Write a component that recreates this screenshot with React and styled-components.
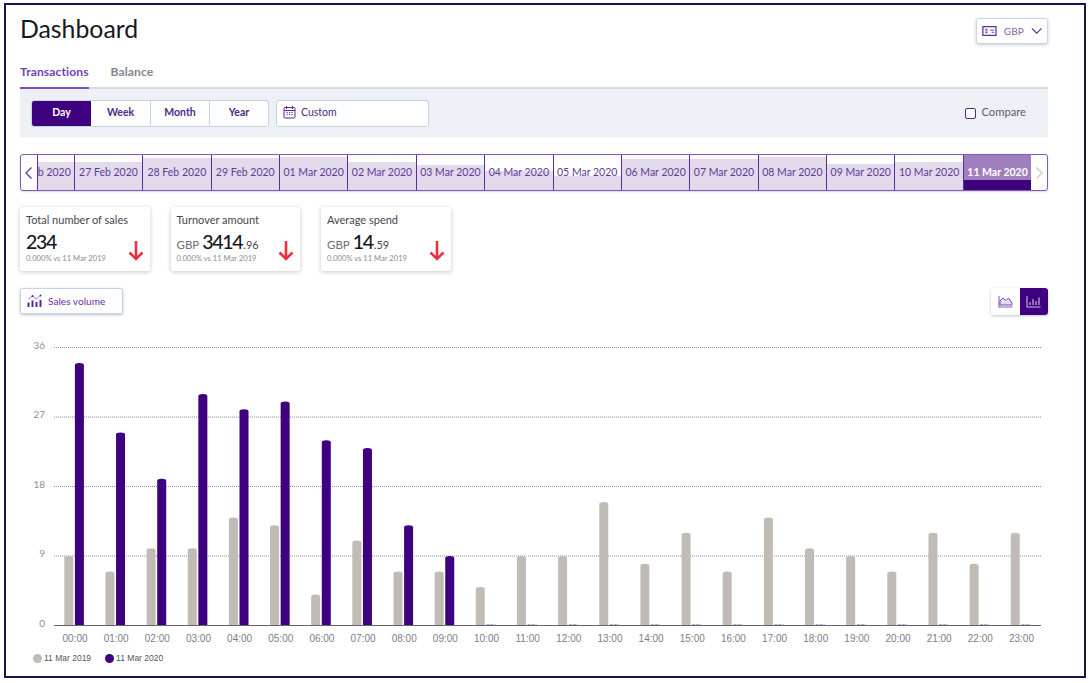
import React from 'react';
import styled, { createGlobalStyle } from 'styled-components';

const GlobalStyle = createGlobalStyle`
  html, body {
    margin: 0;
    padding: 0;
    background: #fff;
    overflow: hidden;
  }
  body {
    font-family: 'Lato', 'Liberation Sans', sans-serif;
  }
`;

const PURPLE = '#3f007f';

const Frame = styled.div`
  box-sizing: border-box;
  width: 1082px;
  height: 675px;
  margin: 3px 0 0 4px;
  padding: 13px 36px 0 14px;
  border: 2px solid #1f1150;
`;

const Header = styled.div`
  display: flex;
  justify-content: space-between;
  align-items: center;
  height: 26px;
`;

const Title = styled.h1`
  margin: 0 0 5px;
  font-size: 24.8px;
  font-weight: 400;
  color: #17171f;
`;

const CurrencyButton = styled.button`
  box-sizing: border-box;
  display: flex;
  align-items: center;
  gap: 7px;
  width: 72px;
  height: 26px;
  padding: 0 5px;
  background: #fff;
  border: 1px solid #c9d6ea;
  border-radius: 3px;
  box-shadow: 0 1px 3px rgba(60, 80, 120, 0.3);
  font: inherit;
  font-size: 10px;
  color: #7b6a95;
`;

const Tabs = styled.div`
  display: flex;
  gap: 22px;
  height: 23px;
  margin-top: 20px;
  border-bottom: 2px solid #d9dadd;
`;

const Tab = styled.div`
  height: 25px;
  box-sizing: border-box;
  font-size: 12.1px;
  font-weight: 700;
  letter-spacing: 0.1px;
  color: ${(props) => (props.$active ? '#6f42b5' : '#85858d')};
  border-bottom: ${(props) => (props.$active ? '2px solid #7a4fc0' : 'none')};
`;

const FilterBand = styled.div`
  display: flex;
  align-items: center;
  height: 48px;
  padding: 0 22px 0 11px;
  background: #edf0f5;
`;

const PeriodGroup = styled.div`
  display: flex;
  height: 27px;
  box-sizing: border-box;
  background: #fff;
  border: 1px solid #c5d3e8;
  border-radius: 3px;
  overflow: hidden;
`;

const PeriodButton = styled.div`
  box-sizing: border-box;
  display: flex;
  align-items: center;
  justify-content: center;
  width: 59px;
  padding-bottom: 2px;
  font-size: 10.5px;
  font-weight: 700;
  color: ${(props) => (props.$active ? '#fff' : '#4b2a88')};
  background: ${(props) => (props.$active ? PURPLE : 'transparent')};
  border-left: ${(props) => (props.$divider ? '1px solid #c5d3e8' : 'none')};
`;

const CustomField = styled.div`
  box-sizing: border-box;
  display: flex;
  align-items: center;
  gap: 5px;
  width: 153px;
  height: 27px;
  margin-left: 7px;
  padding: 0 0 2px 6px;
  background: #fff;
  border: 1px solid #c5d3e8;
  border-radius: 3px;
  font-size: 10.5px;
  color: #4b2a88;
`;

const CompareLabel = styled.label`
  display: flex;
  align-items: center;
  gap: 6px;
  margin: -3px 0 0 auto;
  font-size: 11.2px;
  color: #5e5a72;
`;

const CheckBox = styled.span`
  box-sizing: border-box;
  width: 11px;
  height: 11px;
  margin-top: 4px;
  background: #fff;
  border: 1px solid #4b2a88;
  border-radius: 2px;
`;

const DateStrip = styled.div`
  box-sizing: border-box;
  display: flex;
  height: 37px;
  margin-top: 17px;
  background: #fff;
  border: 1px solid #8457b8;
  border-radius: 3px;
  box-shadow: 0 1px 2px rgba(60, 60, 80, 0.2);
  overflow: hidden;
`;

const StripArrow = styled.div`
  flex: 1 0 15px;
  display: flex;
  align-items: center;
  justify-content: center;
  color: ${(props) => props.$color};
`;

const DateCell = styled.div`
  box-sizing: border-box;
  flex: 0 0 ${(props) => props.$width || 68.4}px;
  display: flex;
  align-items: center;
  justify-content: ${(props) => (props.$clipped ? 'flex-end' : 'center')};
  padding: 0 ${(props) => (props.$clipped ? 3 : 0)}px 2px 0;
  border-left: 1px solid #5c2c9e;
  overflow: hidden;
  white-space: nowrap;
  font-size: 10.5px;
  color: ${(props) => (props.$selected ? '#fff' : '#5d3a98')};
  font-weight: ${(props) => (props.$selected ? 700 : 400)};
  background: ${(props) =>
    props.$selected
      ? `linear-gradient(to top, ${PURPLE} 29%, #a07fbe 29%)`
      : `linear-gradient(to top, #e2daeb ${props.$fill}%, #fff ${props.$fill}%)`};
`;

const CardRow = styled.div`
  display: flex;
  gap: 21px;
  margin-top: 16px;
`;

const Card = styled.div`
  box-sizing: border-box;
  display: flex;
  flex-direction: column;
  width: 129.5px;
  height: 64px;
  padding: 6px 6px 0;
  background: #fff;
  border-radius: 2px;
  box-shadow: 0 1px 4px rgba(50, 50, 70, 0.28);
`;

const CardTitle = styled.div`
  font-size: 11px;
  color: #45454f;
`;

const CardBody = styled.div`
  display: flex;
  justify-content: space-between;
  align-items: flex-end;
  margin-top: 4px;
`;

const CardValue = styled.div`
  display: flex;
  align-items: baseline;
  gap: 3px;
  height: 21px;
  font-size: 19.5px;
  font-weight: 500;
  letter-spacing: -1.3px;
  color: #17171f;
`;

const Currency = styled.span`
  font-size: 11.5px;
  font-weight: 400;
  letter-spacing: 0;
  color: #6f6f78;
`;

const Cents = styled.span`
  font-size: 11px;
  font-weight: 400;
  letter-spacing: 0;
  margin-left: -2px;
  color: #45454f;
`;

const CardNote = styled.div`
  margin-top: 2px;
  font-size: 7.6px;
  line-height: 10px;
  color: #8c8c92;
  white-space: nowrap;
`;

const ArrowSlot = styled.div`
  display: flex;
  margin-bottom: 2px;
`;

const ChartTools = styled.div`
  display: flex;
  justify-content: space-between;
  height: 27px;
  margin-top: 17px;
`;

const MetricButton = styled.div`
  box-sizing: border-box;
  display: flex;
  align-items: center;
  gap: 6px;
  width: 103px;
  height: 26px;
  padding-left: 6px;
  background: #fff;
  border: 1px solid #c5d3e8;
  border-radius: 2px;
  box-shadow: 0 1px 3px rgba(60, 80, 120, 0.35);
  font-size: 10.1px;
  color: #6a2fa0;
`;

const ViewToggle = styled.div`
  display: flex;
  width: 57px;
  height: 27px;
  border-radius: 3px;
  box-shadow: 0 1px 3px rgba(60, 80, 120, 0.35);
  overflow: hidden;
`;

const ViewButton = styled.div`
  flex: 1;
  display: flex;
  align-items: center;
  justify-content: center;
  background: ${(props) => (props.$active ? PURPLE : '#fff')};
`;

const ChartSvg = styled.svg`
  display: block;
  margin-top: 20px;
`;

const Legend = styled.div`
  display: flex;
  gap: 14px;
  height: 14px;
  margin-top: 3px;
  padding-left: 13px;
  font-family: 'Liberation Sans', Arial, sans-serif;
  font-size: 8.5px;
  color: #55555c;
`;

const LegendItem = styled.div`
  display: flex;
  align-items: center;
  gap: 2px;
`;

const LegendDot = styled.span`
  width: 9px;
  height: 9px;
  border-radius: 50%;
  background: ${(props) => props.$color};
`;

const dates = [
  ['27 Feb 2020', 81],
  ['28 Feb 2020', 91],
  ['29 Feb 2020', 91],
  ['01 Mar 2020', 95],
  ['02 Mar 2020', 81],
  ['03 Mar 2020', 71],
  ['04 Mar 2020', 54],
  ['05 Mar 2020', 40],
  ['06 Mar 2020', 89],
  ['07 Mar 2020', 89],
  ['08 Mar 2020', 94],
  ['09 Mar 2020', 74],
  ['10 Mar 2020', 80],
];

const lastYear = [9, 7, 10, 10, 14, 13, 4, 11, 7, 7, 5, 9, 9, 16, 8, 12, 7, 14, 10, 9, 7, 12, 8, 12];
const thisYear = [34, 25, 19, 30, 28, 29, 24, 23, 13, 9];

const ChevronLeft = ({ color = 'currentColor' }) => (
  <svg width="9" height="14" viewBox="0 0 9 14" fill="none" stroke={color} strokeWidth="1.3">
    <path d="M7.5 1.5 2 7l5.5 5.5" />
  </svg>
);

const ChevronRight = ({ color = 'currentColor' }) => (
  <svg width="9" height="14" viewBox="0 0 9 14" fill="none" stroke={color} strokeWidth="1.3">
    <path d="M1.5 1.5 7 7l-5.5 5.5" />
  </svg>
);

const MoneyIcon = () => (
  <svg width="17" height="12" viewBox="0 0 17 12" fill="none" stroke="#5a2a9c">
    <rect x="1" y="1" width="15" height="10" strokeWidth="1.4" />
    <path d="M3.5 4h3M3.5 6h3M3.5 8h3M9 5h5M11 7.5h3" strokeWidth="1" />
  </svg>
);

const CalendarIcon = () => (
  <svg width="13" height="14" viewBox="0 0 13 14" fill="none" stroke="#5a2a9c" strokeWidth="1">
    <rect x="1" y="2.5" width="11" height="10.5" rx="1" />
    <path d="M1 5.5h11M3.5 1v3M9.5 1v3" />
    <path d="M3.5 7.5h1.2M6 7.5h1.2M8.5 7.5h1.2M3.5 9.5h1.2M6 9.5h1.2M8.5 9.5h1.2" />
  </svg>
);

const DownArrow = () => (
  <svg width="16" height="21" viewBox="0 0 16 21" fill="none" stroke="#ee2e3f" strokeWidth="2.6">
    <path d="M8 1v18M1.5 12.5 8 19l6.5-6.5" />
  </svg>
);

const VolumeIcon = () => (
  <svg width="15" height="14" viewBox="0 0 15 14" fill="none" stroke="#5a2a9c">
    <path d="M1.5 13V8.5M5.5 13V6.5M9.5 13V8M13.5 13V6" strokeWidth="2" />
    <path d="M1.5 5 5.5 2l4 3 4-3.5" strokeWidth="1" strokeDasharray="1.5 1" />
    <circle cx="5.5" cy="2" r="1" fill="#5a2a9c" stroke="none" />
    <circle cx="13.5" cy="1.5" r="1" fill="#5a2a9c" stroke="none" />
  </svg>
);

const AreaIcon = () => (
  <svg width="15" height="13" viewBox="0 0 15 13" fill="none">
    <path d="M1 1v11h13.5" stroke="#8a5cc0" strokeWidth="1.1" />
    <path d="M2 10V6l3-3 3 2.5L10.5 3 14 8v2z" stroke="#7a48b5" fill="#e4d9f1" strokeWidth="1" />
  </svg>
);

const BarsIcon = () => (
  <svg width="15" height="13" viewBox="0 0 15 13" fill="none" stroke="#cdbbe2">
    <path d="M1 1v11h13.5" strokeWidth="1.1" />
    <path d="M4 10V7M7 10V4M10 10V6M13 10V2.5" strokeWidth="1.2" />
  </svg>
);

const PLOT = { left: 34, right: 1021, zero: 290.5, unit: 7.72, first: 55, step: 41.15 };

const Bar = ({ x, value, color }) => {
  const height = value * PLOT.unit;
  const top = PLOT.zero - height;
  return (
    <path
      d={`M${x} ${PLOT.zero}V${top + 2}Q${x} ${top} ${x + 4.5} ${top}Q${x + 9} ${top} ${x + 9} ${top + 2}V${PLOT.zero}z`}
      fill={color}
    />
  );
};

const Chart = () => (
  <ChartSvg width="1028" height="313" viewBox="0 0 1028 313">
    {[36, 27, 18, 9].map((tick) => {
      const y = PLOT.zero - tick * PLOT.unit;
      return (
        <g key={tick}>
          <line x1={PLOT.left} x2={PLOT.right} y1={y} y2={y} stroke="#8d8d8d" strokeDasharray="1 1" />
          <text x="25" y={y + 1} textAnchor="end" fontFamily="Lato, sans-serif" fontSize="10" fill="#8f8f8f">
            {tick}
          </text>
        </g>
      );
    })}
    <text x="25" y={PLOT.zero + 1} textAnchor="end" fontFamily="Lato, sans-serif" fontSize="10" fill="#8f8f8f">
      0
    </text>
    {lastYear.map((value, i) => {
      const center = PLOT.first + i * PLOT.step;
      return (
        <g key={i}>
          <Bar x={center - 10.7} value={value} color="#c1bbb6" />
          {i < thisYear.length ? (
            <Bar x={center - 0.1} value={thisYear[i]} color={PURPLE} />
          ) : (
            <line x1={center} x2={center + 9} y1={PLOT.zero - 1} y2={PLOT.zero - 1} stroke="#b9a2d6" strokeDasharray="3 1" />
          )}
          <text
            x={center}
            y="307"
            textAnchor="middle"
            fontFamily="'Liberation Sans', Arial, sans-serif"
            fontSize="10"
            fill="#7d7d85"
          >
            {String(i).padStart(2, '0')}:00
          </text>
        </g>
      );
    })}
    <line x1={PLOT.left} x2={PLOT.right} y1={PLOT.zero} y2={PLOT.zero} stroke="#66646a" strokeWidth="1.2" />
  </ChartSvg>
);

const StatCard = ({ title, currency, value, cents }) => (
  <Card>
    <CardTitle>{title}</CardTitle>
    <CardBody>
      <div>
        <CardValue>
          {currency && <Currency>{currency}</Currency>}
          {value}
          {cents && <Cents>{cents}</Cents>}
        </CardValue>
        <CardNote>0.000% vs 11 Mar 2019</CardNote>
      </div>
      <ArrowSlot>
        <DownArrow />
      </ArrowSlot>
    </CardBody>
  </Card>
);

const App = () => (
  <>
    <GlobalStyle />
    <Frame>
      <Header>
        <Title>Dashboard</Title>
        <CurrencyButton>
          <MoneyIcon />
          GBP
          <svg width="13" height="8" viewBox="0 0 13 8" fill="none" stroke="#4b2a88" strokeWidth="1.2">
            <path d="M1 1l5.5 5.5L12 1" />
          </svg>
        </CurrencyButton>
      </Header>
      <Tabs>
        <Tab $active>Transactions</Tab>
        <Tab>Balance</Tab>
      </Tabs>
      <FilterBand>
        <PeriodGroup>
          <PeriodButton $active>Day</PeriodButton>
          <PeriodButton>Week</PeriodButton>
          <PeriodButton $divider>Month</PeriodButton>
          <PeriodButton $divider>Year</PeriodButton>
        </PeriodGroup>
        <CustomField>
          <CalendarIcon />
          Custom
        </CustomField>
        <CompareLabel>
          <CheckBox />
          Compare
        </CompareLabel>
      </FilterBand>
      <DateStrip>
        <StripArrow $color="#5d3a98">
          <ChevronLeft />
        </StripArrow>
        <DateCell $clipped $width={37} $fill={81}>
          26 Feb 2020
        </DateCell>
        {dates.map(([label, fill]) => (
          <DateCell key={label} $fill={fill}>
            {label}
          </DateCell>
        ))}
        <DateCell $selected>11 Mar 2020</DateCell>
        <StripArrow $color="#c9c9cf">
          <ChevronRight />
        </StripArrow>
      </DateStrip>
      <CardRow>
        <StatCard title="Total number of sales" value="234" />
        <StatCard title="Turnover amount" currency="GBP" value="3414" cents=".96" />
        <StatCard title="Average spend" currency="GBP" value="14" cents=".59" />
      </CardRow>
      <ChartTools>
        <MetricButton>
          <VolumeIcon />
          Sales volume
        </MetricButton>
        <ViewToggle>
          <ViewButton>
            <AreaIcon />
          </ViewButton>
          <ViewButton $active>
            <BarsIcon />
          </ViewButton>
        </ViewToggle>
      </ChartTools>
      <Chart />
      <Legend>
        <LegendItem>
          <LegendDot $color="#c1bbb6" />
          11 Mar 2019
        </LegendItem>
        <LegendItem>
          <LegendDot $color={PURPLE} />
          11 Mar 2020
        </LegendItem>
      </Legend>
    </Frame>
  </>
);

export default App;
